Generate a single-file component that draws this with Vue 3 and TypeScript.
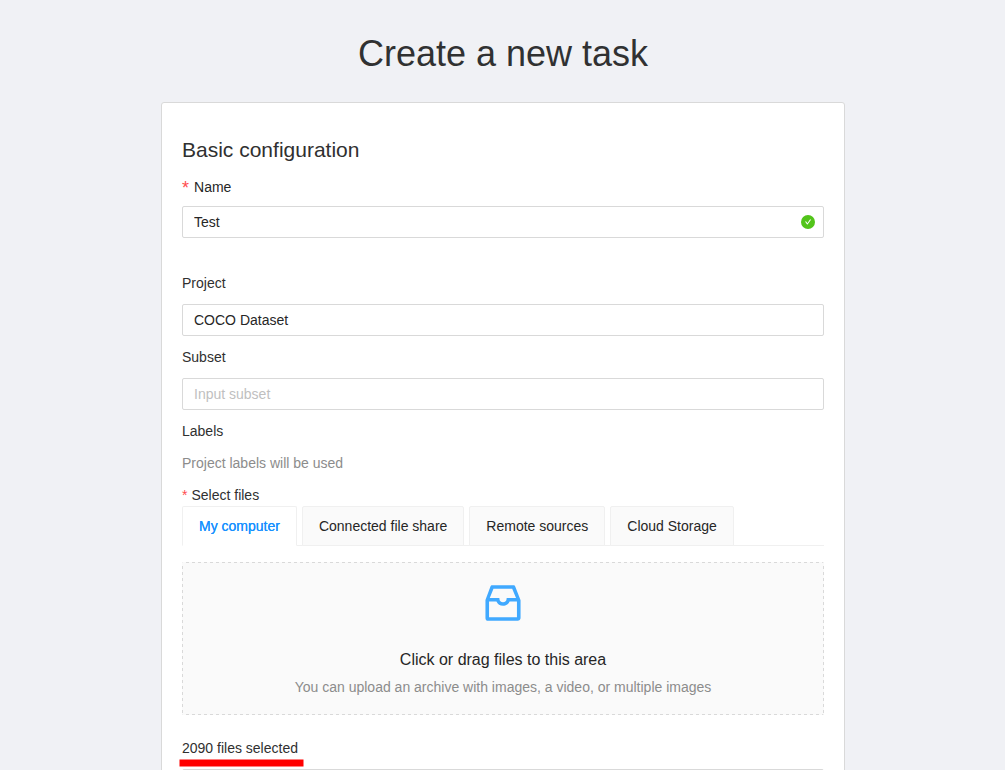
<script setup lang="ts">
import { ref } from 'vue'

const name = ref('Test')
const project = ref('COCO Dataset')
const subset = ref('')
const tabs: string[] = ['My computer', 'Connected file share', 'Remote sources', 'Cloud Storage']
const activeTab = ref(tabs[0])
const fileCount = ref(2090)
</script>

<template>
  <main class="page">
    <h1 class="title">Create a new task</h1>
    <section class="card">
      <h2 class="heading">Basic configuration</h2>

      <label class="label name-label"><span class="star large">*</span>Name</label>
      <div class="field">
        <input v-model="name" type="text" />
        <svg class="valid" viewBox="0 0 1024 1024" fill="currentColor" aria-hidden="true">
          <circle cx="512" cy="512" r="448" />
          <path
            fill="#fff"
            d="M705.500 365.700l-210.600 292a31.800 31.800 0 01-51.700 0L318.500 484.900c-3.800-5.300 0-12.700 6.500-12.700h46.900c10.200 0 19.900 4.900 25.900 13.300l71.200 98.800 157.200-218c6-8.300 15.600-13.300 25.900-13.300H699c6.500 0 10.300 7.400 6.500 12.700z"
          />
        </svg>
      </div>

      <label class="label project-label">Project</label>
      <div class="field"><input v-model="project" type="text" /></div>

      <label class="label spaced">Subset</label>
      <div class="field"><input v-model="subset" type="text" placeholder="Input subset" /></div>

      <div class="label labels-label">Labels</div>
      <div class="label hint">Project labels will be used</div>

      <div class="label files-label"><span class="star">*</span>Select files</div>
      <nav class="tabs">
        <button
          v-for="tab in tabs"
          :key="tab"
          type="button"
          class="tab"
          :class="{ active: tab === activeTab }"
          @click="activeTab = tab"
        >
          {{ tab }}
        </button>
      </nav>

      <div class="dropzone">
        <svg class="inbox" viewBox="0 0 1024 1024" fill="currentColor" aria-hidden="true">
          <path
            d="M885.200 446.300l-.2-.8-112.200-285.100c-5-16.100-19.900-27.200-36.800-27.200H281.200c-17 0-32.100 11.300-36.900 27.600L139.400 443l-.3.700-.2.800c-1.300 4.900-1.700 9.900-1 14.800-.1 1.600-.2 3.200-.2 4.800V830a60.900 60.900 0 0060.800 60.800h627.200c33.500 0 60.800-27.300 60.900-60.800V464.100c0-1.300 0-2.600-.1-3.700.4-4.900 0-9.600-1.300-14.100zm-295.800-43l-.3 15.700c-.8 44.900-31.800 75.100-77.100 75.100-22.100 0-41.100-7.100-54.800-20.600S436 441.200 435.600 419l-.3-15.700H229.500L309 210h399.200l81.700 193.300H589.400zm-375 76.800h157.300c24.300 57.100 76 90.800 140.400 90.800 33.700 0 65-9.400 90.300-27.200 22.200-15.600 39.500-37.400 50.700-63.600h156.500V814H214.400V480.100z"
          />
        </svg>
        <p class="drop-title">Click or drag files to this area</p>
        <p class="drop-hint">You can upload an archive with images, a video, or multiple images</p>
      </div>

      <div class="selected">
        <span>{{ fileCount }} files selected</span>
        <svg class="underline" viewBox="0 0 125 8" aria-hidden="true">
          <rect x="0.5" y="0.5" width="124" height="7" fill="#f00" />
        </svg>
      </div>
      <div class="list"></div>
    </section>
  </main>
</template>

<style>
html,
body {
  background: #f0f1f5;
  overflow: hidden;
}
</style>

<style scoped>
.page {
  box-sizing: border-box;
  height: 770px;
  padding: 31px 0 0 1px;
  overflow: hidden;
  background: #f0f1f5;
  font-family: 'Liberation Sans', Arial, sans-serif;
  font-size: 14px;
  color: #2b2b2b;
}
.title {
  margin: 0 0 25px;
  text-align: center;
  font-size: 36px;
  font-weight: 400;
  line-height: 46px;
  color: #303132;
}
.card {
  box-sizing: border-box;
  width: 684px;
  height: 720px;
  margin: 0 auto;
  padding: 31px 20px 0;
  background: #fff;
  border: 1px solid #d9d9d9;
  border-radius: 3px;
}
.heading {
  margin: 0 0 10px;
  font-size: 21px;
  font-weight: 400;
  line-height: 32px;
  color: #303030;
}
.label {
  display: block;
  height: 22px;
  line-height: 22px;
  color: #303030;
}
.name-label {
  display: flex;
  margin-top: 1px;
  margin-bottom: 8px;
  color: #262626;
}
.star {
  margin-right: 4px;
  color: #ff4d4f;
}
.star.large {
  margin-right: 5px;
  font-size: 18px;
  line-height: 25px;
}
.field {
  box-sizing: border-box;
  display: flex;
  align-items: center;
  height: 32px;
  padding: 0 7px 0 11px;
  background: #fff;
  border: 1px solid #d9d9d9;
  border-radius: 2px;
}
.field input {
  flex: 1;
  min-width: 0;
  height: 22px;
  padding: 0;
  border: 0;
  outline: 0;
  background: transparent;
  font: inherit;
  color: #262626;
}
.field input::placeholder {
  color: #bfbfbf;
}
.valid {
  width: 16px;
  height: 16px;
  color: #52c41a;
}
.project-label {
  margin: 34px 0 10px;
}
.spaced {
  margin: 10px 0;
}
.labels-label {
  margin-top: 10px;
}
.hint {
  margin-top: 10px;
  color: #8c8c8c;
}
.files-label {
  margin-top: 10px;
}
.tabs {
  display: flex;
  gap: 5px;
  height: 40px;
  box-sizing: border-box;
  border-bottom: 1px solid #f0f0f0;
}
.tab {
  box-sizing: border-box;
  height: 40px;
  padding: 0 16px;
  border: 1px solid #f0f0f0;
  border-radius: 2px 2px 0 0;
  background: #fafafa;
  font: inherit;
  white-space: nowrap;
  color: #262626;
  cursor: pointer;
}
.tab.active {
  background: #fff;
  border-bottom-color: #fff;
  color: #1890ff;
  text-shadow: 0 0 0.25px currentColor;
}
.dropzone {
  --dash-x: linear-gradient(90deg, #d9d9d9 1.5px, transparent 1.5px 4.5px, #d9d9d9 4.5px);
  --dash-y: linear-gradient(#d9d9d9 1.5px, transparent 1.5px 4.5px, #d9d9d9 4.5px);
  box-sizing: border-box;
  display: flex;
  flex-direction: column;
  align-items: center;
  height: 153px;
  margin-top: 16px;
  padding-top: 17px;
  background:
    var(--dash-x) 0 0 / 6px 1px repeat-x,
    var(--dash-x) 0 100% / 6px 1px repeat-x,
    var(--dash-y) 0 0 / 1px 6px repeat-y,
    var(--dash-y) 100% 0 / 1px 6px repeat-y,
    #fafafa;
  border-radius: 2px;
}
.inbox {
  width: 48px;
  height: 48px;
  flex: none;
  color: #40a9ff;
}
.drop-title {
  margin: 20px 0 4px;
  font-size: 16px;
  line-height: 25px;
  color: #262626;
}
.drop-hint {
  margin: 0;
  line-height: 22px;
  color: #8c8c8c;
}
.selected {
  position: relative;
  height: 22px;
  margin-top: 22px;
  line-height: 22px;
  color: #303030;
}
.underline {
  position: absolute;
  left: -3px;
  top: 22px;
  width: 125px;
  height: 8px;
}
.list {
  margin-top: 10px;
  height: 40px;
  border: 1px solid #d9d9d9;
  border-radius: 2px;
}
</style>
